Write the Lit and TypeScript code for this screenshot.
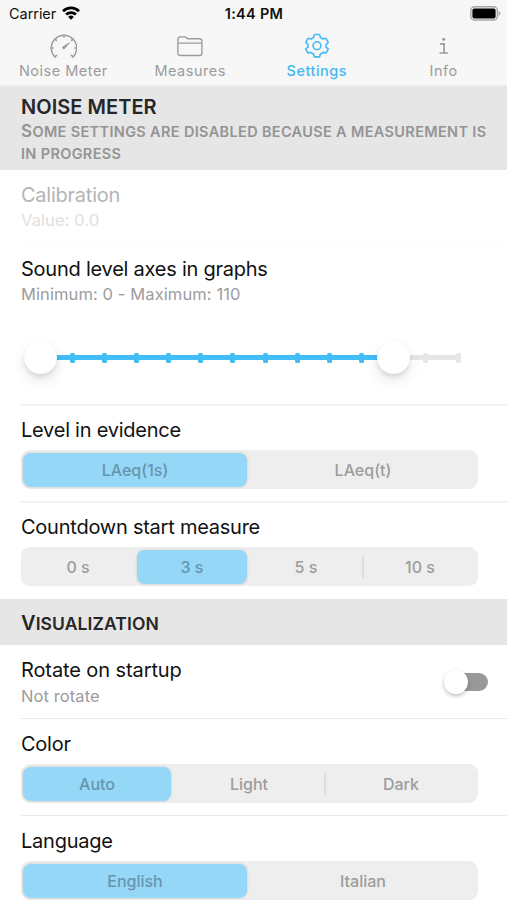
import { LitElement, html, css, svg } from "lit";
import { customElement, property } from "lit/decorators.js";
import { classMap } from "lit/directives/class-map.js";
import { styleMap } from "lit/directives/style-map.js";

const gauge = svg`<svg width="28" height="25" viewBox="0 0 28 25" fill="none" stroke="currentColor" stroke-width="1.5" stroke-linecap="round">
  <path d="M5.9 22.9 A12.7 12.7 0 1 1 24.1 22.9"/>
  <path d="M5.9 22.9 L7.7 21.2 M24.1 22.9 L22.3 21.2 M2.3 14 H4.1 M27.7 14 H25.9 M6.1 5.1 L7.4 6.4 M23.9 5.1 L22.6 6.4 M15 1.4 V3.2"/>
  <path d="M20.1 9 L13.9 12.9 a1.1 1.1 0 0 0 1.6 1.6 Z" fill="currentColor" stroke-width="1"/>
</svg>`;
const folder = svg`<svg width="26" height="21" viewBox="0 0 26 21" fill="none" stroke="currentColor" stroke-width="1.4" stroke-linejoin="round">
  <path d="M.9 17.2 V3.2 A2.3 2.3 0 0 1 3.2.9 H8.2 L10.7 2.8 H22.6 A2.3 2.3 0 0 1 24.9 5.1 V17.2 A2.3 2.3 0 0 1 22.6 19.5 H3.2 A2.3 2.3 0 0 1 .9 17.2 Z M.9 7.1 H24.9"/>
</svg>`;
const gear = svg`<svg width="24" height="26" viewBox="0 0 24 26" fill="none" stroke="currentColor" stroke-width="1.6" stroke-linejoin="round">
  <circle cx="12" cy="12.7" r="3.9"/>
  <path d="M10 1.5 H14 Q14.8 1.5 14.9 2.3 L15.3 4.4 Q16.8 5 18.1 6.1 L20.1 5.4 Q20.9 5.2 21.3 5.9 L23 8.9 Q23.4 9.6 22.7 10.1 L21 11.3 Q21.3 12.7 21 14.1 L22.7 15.4 Q23.4 15.9 23 16.6 L21.3 19.5 Q20.9 20.2 20.1 20 L18.1 19.3 Q16.8 20.5 15.3 21 L14.9 23.1 Q14.8 23.9 14 23.9 H10 Q9.2 23.9 9.1 23.1 L8.7 21 Q7.2 20.5 5.9 19.3 L3.9 20 Q3.1 20.2 2.7 19.5 L1 16.6 Q.6 15.9 1.3 15.4 L3 14.1 Q2.7 12.7 3 11.3 L1.3 10.1 Q.6 9.6 1 8.9 L2.7 5.9 Q3.1 5.2 3.9 5.4 L5.9 6.1 Q7.2 5 8.7 4.4 L9.1 2.3 Q9.2 1.5 10 1.5 Z"/>
</svg>`;
const info = svg`<svg width="10" height="18" viewBox="0 0 10 18" fill="none" stroke="currentColor" stroke-width="1.7">
  <circle cx="4.8" cy="2.2" r="1.5" fill="currentColor" stroke="none"/>
  <path d="M.9 6.9 H5.1 V16 M.5 16 H9"/>
</svg>`;
const wifi = svg`<svg width="18" height="14" viewBox="0 0 18 14" fill="none" stroke="#000" stroke-width="2.7">
  <path d="M1 5.2 A11.5 11.5 0 0 1 17 5.2 M4.1 8.6 A7.2 7.2 0 0 1 13.9 8.6"/>
  <path d="M9 13.7 L6.2 10.9 A4 4 0 0 1 11.8 10.9 Z" fill="#000" stroke="none"/>
</svg>`;
const battery = svg`<svg width="31" height="15" viewBox="0 0 31 15">
  <rect x=".8" y=".8" width="26.6" height="13.2" rx="3.8" fill="none" stroke="#a6a6a6" stroke-width="1.4"/>
  <rect x="2.4" y="2.4" width="23.2" height="10" rx="2" fill="#000"/>
  <path d="M28.6 5 Q30.4 5.6 30.4 7.4 T28.6 9.8 Z" fill="#a6a6a6"/>
</svg>`;

@customElement("segment-bar")
class SegmentBar extends LitElement {
  @property({ attribute: false }) options: string[] = [];
  @property({ type: Number }) selected = 0;

  static styles = css`
    :host { display: block; width: 457px; }
    .bar {
      display: flex; box-sizing: border-box; height: 39px; padding: 2.5px 3px 2.5px 2px;
      background: #eee; border-radius: 9px;
    }
    .option {
      flex: 1 1 0; display: flex; align-items: center; justify-content: center;
      position: relative; border-radius: 8px; margin: 0 2px;
      font-size: 16px; font-weight: 500; letter-spacing: 0; color: #9c9c9c;
    }
    .option:first-child { margin-left: 0; }
    .option:last-child { margin-right: 0; }
    .on { background: #95d7f6; color: #6595ae; box-shadow: 0 0 3px rgba(0, 0, 0, 0.16); }
    .split::before {
      content: ""; position: absolute; left: -3px; top: 6px; bottom: 6px;
      width: 2px; background: #ddd;
    }
  `;

  render() {
    return html`<div class="bar">
      ${this.options.map((o, i) => html`<div class=${classMap({
        option: true,
        on: i === this.selected,
        split: i > 0 && i !== this.selected && i - 1 !== this.selected,
      })}>${o}</div>`)}
    </div>`;
  }
}

@customElement("range-slider")
class RangeSlider extends LitElement {
  @property({ type: Number }) low = 0;
  @property({ type: Number }) high = 110;
  @property({ type: Number }) max = 130;

  static styles = css`
    :host { display: block; }
    .track { position: relative; width: 418px; height: 5px; margin-left: 19px; background: #e6e6e6; }
    .fill { position: absolute; top: 0; height: 5px; background: #43bdf8; }
    .tick {
      position: absolute; top: -2.5px; width: 5px; height: 10px; margin-left: -2.5px;
      border-radius: 1.5px; background: #e6e6e6;
    }
    .lit { background: #43bdf8; }
    .knob {
      position: absolute; top: -14px; width: 33px; height: 33px; margin-left: -16.5px;
      border-radius: 50%; background: #fff;
      box-shadow: 0 3px 4px rgba(0, 0, 0, 0.09), 0 7px 14px rgba(0, 0, 0, 0.09), 0 0 1px rgba(0, 0, 0, 0.06);
    }
  `;

  render() {
    const at = (v: number) => `${(v / this.max) * 100}%`;
    const ticks = Array.from({ length: this.max / 10 + 1 }, (_, i) => i * 10);
    return html`<div class="track">
      <div class="fill" style=${styleMap({ left: at(this.low), width: at(this.high - this.low) })}></div>
      ${ticks.map((t) => html`<div class=${classMap({ tick: true, lit: t >= this.low && t <= this.high })}
        style=${styleMap({ left: at(t) })}></div>`)}
      ${[this.low, this.high].map((v) => html`<div class="knob" style=${styleMap({ left: at(v) })}></div>`)}
    </div>`;
  }
}

@customElement("app-root")
class AppRoot extends LitElement {
  static styles = css`
    :host {
      display: block; height: 900px; overflow: hidden; background: #fff;
      font-family: Inter, "Liberation Sans", sans-serif; color: #111;
    }
    .top { box-sizing: border-box; height: 86px; background: #f7f7f7; border-bottom: 1px solid #efefef; }
    .status {
      display: grid; grid-template-columns: 1fr auto 1fr; align-items: center;
      height: 27px; padding: 0 6px 0 9px; font-size: 14.5px;
    }
    .carrier { display: flex; align-items: center; gap: 6px; letter-spacing: -0.05px; }
    .carrier svg { margin-bottom: 2px; }
    .time { font-weight: 600; letter-spacing: 0.3px; margin-right: 2px; }
    .power { display: flex; justify-content: flex-end; }
    .tabs { display: grid; grid-template-columns: repeat(4, 1fr); padding-top: 1px; }
    .tab { display: flex; flex-direction: column; align-items: center; color: #9c9c9c; }
    .glyph { display: flex; align-items: center; height: 36px; }
    .name { font-size: 14.5px; line-height: 14px; letter-spacing: 0.5px; }
    .active { color: #43b9f5; }
    .active .name { font-weight: 500; }
    .section { box-sizing: border-box; background: #e6e6e6; padding-left: 21px; }
    .first { height: 84px; padding-top: 8px; }
    .second { height: 46px; padding-top: 12px; }
    .heading { font-size: 20px; line-height: 26px; font-weight: 600; color: #262626; letter-spacing: 0.05px; }
    .caps { text-transform: uppercase; font-size: 17.5px; line-height: 25px; letter-spacing: 0.1px; }
    .caps::first-letter { font-size: 20px; }
    .notice {
      font-size: 14.5px; line-height: 22px; font-weight: 600; color: #949494;
      text-transform: uppercase; letter-spacing: 0.34px; padding-top: 1px;
    }
    .notice::first-letter { font-size: 17px; line-height: 1; }
    .row { box-sizing: border-box; margin-left: 21px; padding-top: 12px; border-bottom: 2px solid #f3f3f3; }
    .calibration { height: 74px; border-bottom-color: #fdfdfd; }
    .calibration .title { color: #b4b4b4; }
    .calibration .sub { color: #e0e0e0; }
    .axes { height: 162px; }
    .choice { height: 97px; padding-top: 11px; }
    .bare { border-bottom-color: transparent; height: 96px; }
    .rotate {
      display: flex; justify-content: space-between; height: 74px; padding-right: 19px;
      border-bottom: 1px solid #e9e9e9;
    }
    .rotate .title { letter-spacing: -0.1px; line-height: 27px; }
    .thin { padding-top: 12px; border-bottom: 1px solid #e9e9e9; }
    .title { font-size: 20px; line-height: 26px; letter-spacing: -0.24px; }
    .sub { font-size: 16.5px; line-height: 25px; color: #9c9c9c; letter-spacing: 0.1px; }
    range-slider { margin-top: 48px; }
    segment-bar { margin-top: 7px; }
    .switch { position: relative; width: 37px; height: 18px; margin-top: 16px; border-radius: 9px; background: #999; }
    .dot {
      position: absolute; left: -7px; top: -3px; width: 24px; height: 24px; border-radius: 50%;
      background: #fff; box-shadow: 0 2px 4px rgba(0, 0, 0, 0.25);
    }
  `;

  private tab(icon: unknown, name: string, active = false) {
    return html`<div class=${classMap({ tab: true, active })}>
      <div class="glyph">${icon}</div><div class="name">${name}</div>
    </div>`;
  }

  private choice(title: string, options: string[], selected: number, variant = "") {
    return html`<div class="row choice ${variant}">
      <div class="title">${title}</div>
      <segment-bar .options=${options} .selected=${selected}></segment-bar>
    </div>`;
  }

  render() {
    return html`
      <div class="top">
        <div class="status">
          <div class="carrier"><span>Carrier</span>${wifi}</div>
          <div class="time">1:44 PM</div>
          <div class="power">${battery}</div>
        </div>
        <div class="tabs">
          ${this.tab(gauge, "Noise Meter")}
          ${this.tab(folder, "Measures")}
          ${this.tab(gear, "Settings", true)}
          ${this.tab(info, "Info")}
        </div>
      </div>
      <div class="section first">
        <div class="heading">NOISE METER</div>
        <div class="notice">Some settings are disabled because a measurement is<br />in progress</div>
      </div>
      <div class="row calibration">
        <div class="title">Calibration</div>
        <div class="sub">Value: 0.0</div>
      </div>
      <div class="row axes">
        <div class="title">Sound level axes in graphs</div>
        <div class="sub">Minimum: 0 - Maximum: 110</div>
        <range-slider low="0" high="110" max="130"></range-slider>
      </div>
      ${this.choice("Level in evidence", ["LAeq(1s)", "LAeq(t)"], 0)}
      ${this.choice("Countdown start measure", ["0 s", "3 s", "5 s", "10 s"], 1, "bare")}
      <div class="section second"><div class="heading caps">Visualization</div></div>
      <div class="row rotate">
        <div>
          <div class="title">Rotate on startup</div>
          <div class="sub">Not rotate</div>
        </div>
        <div class="switch"><div class="dot"></div></div>
      </div>
      ${this.choice("Color", ["Auto", "Light", "Dark"], 0, "thin")}
      ${this.choice("Language", ["English", "Italian"], 0, "thin")}
    `;
  }
}
